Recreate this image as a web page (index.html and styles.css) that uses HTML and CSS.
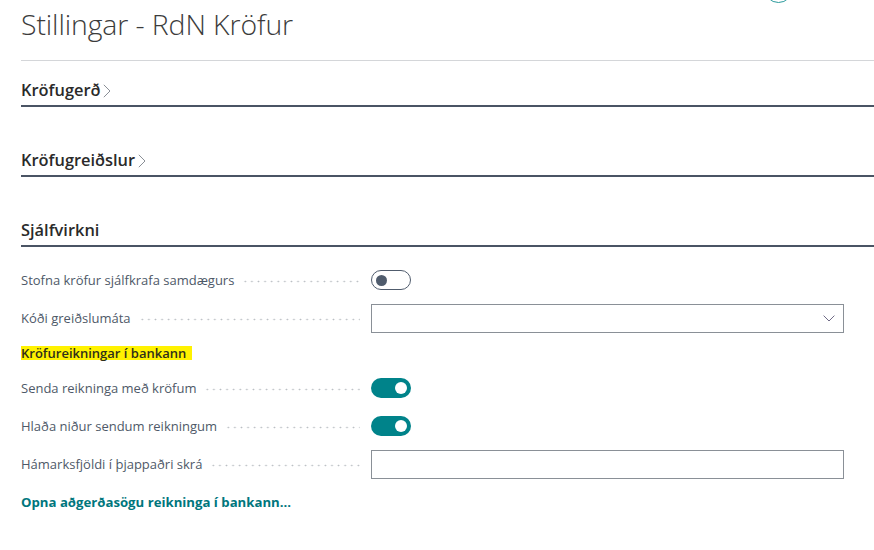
FILE: index.html
```html
<!DOCTYPE html>
<html lang="is">
<head>
<meta charset="utf-8">
<title>Stillingar - RdN Kröfur</title>
<link rel="stylesheet" href="styles.css">
</head>
<body>
<div class="avatar"></div>
<div class="page">
  <header class="page-head">
    <h1 class="title">Stillingar - RdN Kröfur</h1>
  </header>

  <section class="section">
    <h2 class="section-title">Kröfugerð<span class="chev">
      <svg width="8" height="14" viewBox="0 0 8 14"><path d="M0.8 0.8 L7 7 L0.8 13.2" fill="none" stroke="#8a8f96" stroke-width="1"/></svg>
    </span></h2>
  </section>

  <section class="section">
    <h2 class="section-title">Kröfugreiðslur<span class="chev">
      <svg width="8" height="14" viewBox="0 0 8 14"><path d="M0.8 0.8 L7 7 L0.8 13.2" fill="none" stroke="#8a8f96" stroke-width="1"/></svg>
    </span></h2>
  </section>

  <section class="section">
    <h2 class="section-title">Sjálfvirkni</h2>
  </section>

  <div class="fields">
    <div class="row">
      <div class="label"><span class="text">Stofna kröfur sjálfkrafa samdægurs</span><span class="dots"></span></div>
      <div class="toggle off"><span class="knob"></span></div>
    </div>
    <div class="row">
      <div class="label"><span class="text">Kóði greiðslumáta</span><span class="dots"></span></div>
      <div class="input select">
        <svg class="caret" width="12" height="7" viewBox="0 0 12 7"><path d="M0.6 0.6 L6 6 L11.4 0.6" fill="none" stroke="#6f6a86" stroke-width="1"/></svg>
      </div>
    </div>
    <div class="group-row">
      <span class="group-title">Kröfureikningar í bankann</span>
    </div>
    <div class="row">
      <div class="label"><span class="text">Senda reikninga með kröfum</span><span class="dots"></span></div>
      <div class="toggle on"><span class="knob"></span></div>
    </div>
    <div class="row">
      <div class="label"><span class="text">Hlaða niður sendum reikningum</span><span class="dots"></span></div>
      <div class="toggle on"><span class="knob"></span></div>
    </div>
    <div class="row">
      <div class="label"><span class="text">Hámarksfjöldi í þjappaðri skrá</span><span class="dots"></span></div>
      <div class="input"></div>
    </div>
    <div class="row">
      <a class="action" href="#">Opna aðgerðasögu reikninga í bankann...</a>
    </div>
  </div>
</div>
</body>
</html>
```

FILE: styles.css
```css
html, body {
  margin: 0;
  padding: 0;
  background: #ffffff;
}

body {
  font-family: "Open Sans", "Liberation Sans", sans-serif;
  color: #212121;
  overflow: hidden;
  width: 874px;
  height: 550px;
  position: relative;
}

.avatar {
  position: absolute;
  left: 764px;
  top: -26px;
  width: 27px;
  height: 27px;
  border: 1.5px solid #2a9a9c;
  border-radius: 50%;
}

.page {
  padding-left: 21px;
}

.page-head {
  height: 60px;
  border-bottom: 1px solid #d4d6d9;
}

.title {
  margin: 0;
  padding-top: 5px;
  font-size: 28.4px;
  line-height: 38px;
  font-weight: 300;
  color: #3c3c3c;
  letter-spacing: -0.1px;
}

.section {
  margin-top: 43px;
  border-bottom: 2px solid #4a5464;
  padding-bottom: 5px;
}

.section:first-of-type {
  margin-top: 19px;
}

.section-title {
  margin: 0;
  font-size: 16.4px;
  line-height: 20px;
  font-weight: 600;
  color: #2a2a2a;
  display: flex;
  align-items: center;
}

.chev {
  display: inline-flex;
  margin-left: 3px;
  margin-top: 1px;
}

.fields {
  margin-top: 14px;
}

.row {
  display: flex;
  align-items: center;
  height: 38px;
}

.label {
  width: 350px;
  display: flex;
  align-items: center;
}

.text {
  font-size: 13px;
  color: #4e5968;
  white-space: nowrap;
}

.dots {
  flex: 1;
  height: 3px;
  margin: 3px 11px 0 8px;
  background-image: radial-gradient(circle, #b9bdc2 0.7px, transparent 1.1px);
  background-size: 6.6px 3px;
  background-repeat: repeat-x;
}

.toggle {
  width: 40px;
  height: 20px;
  border-radius: 10px;
  box-sizing: border-box;
  display: flex;
  align-items: center;
  padding: 0 4px;
}

.toggle.off {
  border: 1px solid #505c6d;
}

.toggle.off .knob {
  width: 11px;
  height: 11px;
  border-radius: 50%;
  background: #505c6d;
}

.toggle.on {
  background: #00838a;
  justify-content: flex-end;
}

.toggle.on .knob {
  width: 12px;
  height: 12px;
  border-radius: 50%;
  background: #ffffff;
}

.input {
  width: 473px;
  height: 29px;
  border: 1px solid #8a9097;
  box-sizing: border-box;
  display: flex;
  align-items: center;
  justify-content: flex-end;
}

.caret {
  margin-right: 8px;
  margin-top: 1px;
}

.group-row {
  height: 32px;
  display: flex;
  align-items: center;
}

.group-title {
  font-size: 13px;
  font-weight: 600;
  color: #2f2f1a;
  background: #fff200;
  padding-right: 6px;
  line-height: 14px;
  white-space: nowrap;
}

.action {
  font-size: 13.2px;
  font-weight: 700;
  color: #00767d;
  text-decoration: none;
  white-space: nowrap;
}
```
